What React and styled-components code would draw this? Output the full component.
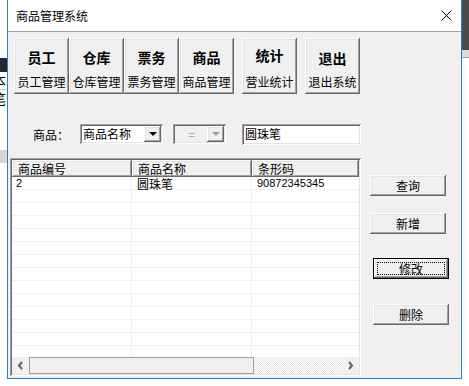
import React from 'react';
import styled, { createGlobalStyle } from 'styled-components';

const GlobalStyle = createGlobalStyle`
  html, body { margin: 0; padding: 0; background: #fff; }
  body {
    font-family: "Noto Sans CJK SC", "Liberation Sans", sans-serif;
    font-size: 12px;
    color: #000;
  }
`;

const raised = `
  box-shadow: inset -1px -1px #696969, inset 1px 1px #fff,
    inset -2px -2px #a0a0a0, inset 2px 2px #e3e3e3;
`;

const sunken = `
  box-shadow: inset 1px 1px #a0a0a0, inset -1px -1px #fff,
    inset 2px 2px #696969, inset -2px -2px #e3e3e3;
`;

const Desktop = styled.div`
  display: flex;
  width: 469px;
  height: 386px;
  overflow: hidden;
  background: #fff;
`;

const Strip = styled.div`
  width: ${p => p.$w}px;
  flex: none;
  display: flex;
  flex-direction: column;
  overflow: hidden;
`;

const Band = styled.div`
  height: ${p => p.$h}px;
  flex: none;
  background: ${p => p.$bg || '#fff'};
  border-bottom: ${p => (p.$line ? `1px solid ${p.$line}` : 'none')};
  overflow: hidden;
  font-size: 14px;
  line-height: ${p => p.$h}px;
  white-space: nowrap;
`;

const Clipped = styled.span`
  display: inline-block;
  margin-left: -8px;
`;

const Window = styled.div`
  width: 455px;
  height: 379px;
  flex: none;
  box-sizing: border-box;
  border: 1px solid #1883d7;
  border-top: none;
  background: #f0f0f0;
  display: flex;
  flex-direction: column;
`;

const TitleBar = styled.div`
  height: 31px;
  flex: none;
  background: #fff;
  border-bottom: 1px solid #a0a0a0;
  display: flex;
  align-items: center;
  justify-content: space-between;
  padding: 0 9px 0 8px;
`;

const Title = styled.span`
  font-size: 12px;
  line-height: 14px;
`;

const Client = styled.div`
  flex: 1;
  display: flex;
  flex-direction: column;
`;

const Toolbar = styled.div`
  display: flex;
  gap: 8px;
  margin: 6px 0 0 6px;
`;

const ToolGroup = styled.div`
  display: flex;
  gap: ${p => p.$gap || 0}px;
`;

const ToolButton = styled.div`
  width: 55px;
  height: 56px;
  box-sizing: border-box;
  background: #f0f0f0;
  ${raised}
  display: flex;
  flex-direction: column;
  align-items: center;
`;

const ToolTitle = styled.span`
  margin-top: ${p => p.$top || 11}px;
  font-size: 14px;
  font-weight: bold;
  line-height: 16px;
`;

const ToolLabel = styled.span`
  margin-top: auto;
  margin-bottom: 5px;
  font-size: 12px;
  line-height: 14px;
`;

const SearchRow = styled.div`
  display: flex;
  align-items: center;
  height: 20px;
  margin-top: 30px;
  padding-left: 25px;
`;

const Label = styled.span`
  width: 47px;
  flex: none;
  font-size: 12px;
`;

const Field = styled.div`
  width: ${p => p.$w}px;
  height: ${p => p.$h || 20}px;
  margin-left: ${p => p.$ml || 0}px;
  flex: none;
  box-sizing: border-box;
  background: ${p => (p.$disabled ? '#f0f0f0' : '#fff')};
  ${sunken}
  display: flex;
  align-items: center;
  padding: 2px;
  font-size: 12px;
  color: ${p => (p.$disabled ? '#a0a0a0' : '#000')};
`;

const FieldText = styled.span`
  flex: 1;
  padding-left: ${p => p.$pl || 1}px;
  line-height: 14px;
  text-align: ${p => p.$align || 'left'};
`;

const DropButton = styled.div`
  width: 17px;
  height: 16px;
  flex: none;
  background: #f0f0f0;
  ${raised}
  display: flex;
  align-items: center;
  justify-content: center;
`;

const Arrow = styled.div`
  width: 0;
  height: 0;
  border-left: 4px solid transparent;
  border-right: 4px solid transparent;
  border-top: 4px solid ${p => (p.$disabled ? '#a0a0a0' : '#000')};
`;

const Body = styled.div`
  display: flex;
  margin-top: 14px;
  padding-left: 2px;
`;

const ListFrame = styled.div`
  width: 351px;
  height: 218px;
  flex: none;
  box-sizing: border-box;
  padding: 2px;
  background: #fff;
  ${sunken}
  display: flex;
  flex-direction: column;
`;

const HeaderRow = styled.div`
  display: flex;
  height: 17px;
  flex: none;
`;

const HeaderCell = styled.div`
  width: ${p => (p.$w ? `${p.$w}px` : 'auto')};
  flex: ${p => (p.$w ? 'none' : 1)};
  box-sizing: border-box;
  background: #f0f0f0;
  ${raised}
  padding-left: 6px;
  font-size: 12px;
  line-height: 17px;
`;

const Rows = styled.div`
  flex: 1;
  overflow: hidden;
  display: flex;
  flex-direction: column;
`;

const Row = styled.div`
  display: flex;
  height: 13px;
  flex: none;
  box-shadow: inset 0 -1px #f0f0f0;
`;

const Cell = styled.div`
  width: ${p => (p.$w ? `${p.$w}px` : 'auto')};
  flex: ${p => (p.$w ? 'none' : 1)};
  box-sizing: border-box;
  border-right: ${p => (p.$w ? '1px solid #f0f0f0' : 'none')};
  padding-left: ${p => p.$pl || 5}px;
  font-family: ${p => (p.$num ? '"Liberation Sans", "Noto Sans CJK SC", sans-serif' : 'inherit')};
  font-size: ${p => (p.$num ? 11 : 12)}px;
  line-height: 13px;
  white-space: nowrap;
`;

const ScrollBar = styled.div`
  display: flex;
  height: 17px;
  flex: none;
  background: #f0f0f0;
`;

const ScrollArrow = styled.div`
  width: 17px;
  flex: none;
  display: flex;
  align-items: center;
  justify-content: center;
`;

const Thumb = styled.div`
  width: 225px;
  flex: none;
  box-sizing: border-box;
  border: 1px solid #a0a0a0;
  background: #f0f0f0;
`;

const Track = styled.div`
  flex: 1;
  background: repeating-conic-gradient(#e6e6e6 0 25%, #fff 0 50%) 0 0 / 2px 2px;
`;

const ButtonCol = styled.div`
  display: flex;
  flex-direction: column;
  margin-left: 9px;
  padding-top: 17px;
`;

const PushButton = styled.div`
  width: 76px;
  height: 21px;
  box-sizing: border-box;
  margin-top: ${p => p.$mt || 0}px;
  margin-left: ${p => p.$ml || 0}px;
  background: #f0f0f0;
  ${p =>
    p.$default
      ? `border: 1px solid #000; box-shadow: inset -1px -1px #696969, inset 1px 1px #fff, inset -2px -2px #a0a0a0;`
      : raised}
  position: relative;
  display: flex;
  align-items: center;
  justify-content: center;
  font-size: 12px;
  line-height: 14px;
`;

const FocusRing = styled.div`
  position: absolute;
  inset: 3px;
  border: 1px dotted #000;
`;

const columns = [120, 120];
const rows = [['2', '圆珠笔', '90872345345']];
const emptyRows = Array.from({ length: 13 });

function CloseIcon() {
  return (
    <svg width="11" height="11" viewBox="0 0 11 11">
      <path d="M0.5 0.5 L10.5 10.5 M10.5 0.5 L0.5 10.5" stroke="#000" strokeWidth="1" fill="none" />
    </svg>
  );
}

function Chevron({ dir }) {
  const d = dir === 'left' ? 'M5 1 L2 4.5 L5 8' : 'M2 1 L5 4.5 L2 8';
  return (
    <svg width="7" height="9" viewBox="0 0 7 9">
      <path d={d} stroke="#606060" strokeWidth="2" fill="none" />
    </svg>
  );
}

const tools = [
  { title: '员工', label: '员工管理' },
  { title: '仓库', label: '仓库管理' },
  { title: '票务', label: '票务管理' },
  { title: '商品', label: '商品管理' },
];

export default function App() {
  return (
    <>
      <GlobalStyle />
      <Desktop>
        <Strip $w={7}>
          <Band $h={58} />
          <Band $h={14} $bg="#1d2838" />
          <Band $h={17} $line="#c8c8c8"><Clipped>本</Clipped></Band>
          <Band $h={16}><Clipped>笔</Clipped></Band>
          <Band $h={44} />
          <Band $h={13} $bg="#d8d8d8" />
        </Strip>

        <Window>
          <TitleBar>
            <Title>商品管理系统</Title>
            <CloseIcon />
          </TitleBar>
          <Client>
            <Toolbar>
              <ToolGroup>
                {tools.map(t => (
                  <ToolButton key={t.title}>
                    <ToolTitle>{t.title}</ToolTitle>
                    <ToolLabel>{t.label}</ToolLabel>
                  </ToolButton>
                ))}
              </ToolGroup>
              <ToolGroup $gap={8}>
                <ToolButton>
                  <ToolTitle $top={9}>统计</ToolTitle>
                  <ToolLabel>营业统计</ToolLabel>
                </ToolButton>
                <ToolButton>
                  <ToolTitle $top={12}>退出</ToolTitle>
                  <ToolLabel>退出系统</ToolLabel>
                </ToolButton>
              </ToolGroup>
            </Toolbar>

            <SearchRow>
              <Label>商品：</Label>
              <Field $w={83}>
                <FieldText>商品名称</FieldText>
                <DropButton><Arrow /></DropButton>
              </Field>
              <Field $w={53} $ml={10} $disabled>
                <FieldText $align="center">=</FieldText>
                <DropButton><Arrow $disabled /></DropButton>
              </Field>
              <Field $w={119} $ml={16} $h={21}>
                <FieldText>圆珠笔</FieldText>
              </Field>
            </SearchRow>

            <Body>
              <ListFrame>
                <HeaderRow>
                  <HeaderCell $w={columns[0]}>商品编号</HeaderCell>
                  <HeaderCell $w={columns[1]}>商品名称</HeaderCell>
                  <HeaderCell>条形码</HeaderCell>
                </HeaderRow>
                <Rows>
                  {rows.map(r => (
                    <Row key={r[0]}>
                      <Cell $w={columns[0]} $pl={4} $num>{r[0]}</Cell>
                      <Cell $w={columns[1]}>{r[1]}</Cell>
                      <Cell $num>{r[2]}</Cell>
                    </Row>
                  ))}
                  {emptyRows.map((_, i) => (
                    <Row key={i}>
                      <Cell $w={columns[0]} />
                      <Cell $w={columns[1]} />
                      <Cell />
                    </Row>
                  ))}
                </Rows>
                <ScrollBar>
                  <ScrollArrow><Chevron dir="left" /></ScrollArrow>
                  <Thumb />
                  <Track />
                  <ScrollArrow><Chevron dir="right" /></ScrollArrow>
                </ScrollBar>
              </ListFrame>

              <ButtonCol>
                <PushButton>查询</PushButton>
                <PushButton $mt={17}>新增</PushButton>
                <PushButton $mt={24} $ml={3} $default>
                  修改
                  <FocusRing />
                </PushButton>
                <PushButton $mt={25} $ml={3}>删除</PushButton>
              </ButtonCol>
            </Body>
          </Client>
        </Window>

        <Strip $w={7}>
          <Band $h={50} $bg="#4a4a4a" />
          <Band $h={7} $bg="#dcdcdc" $line="#a0a0a0" />
        </Strip>
      </Desktop>
    </>
  );
}
